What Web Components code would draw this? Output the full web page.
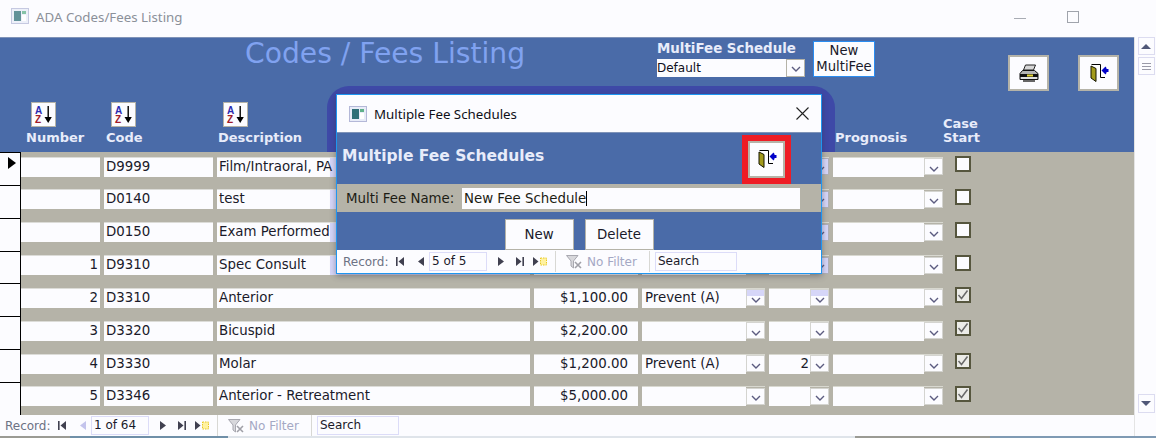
<!DOCTYPE html>
<html>
<head>
<meta charset="utf-8">
<title>ADA Codes/Fees Listing</title>
<style>
    html, body { margin: 0; height: 100%; overflow: hidden; background: #fcfcff; }
    body { font-family: 'DejaVu Sans', sans-serif; font-size: 13.35px; color: #1a1a2a; }
    #page { display: flex; flex-direction: column; width: 1156px; height: 438px; position: relative; }
    #main { display: flex; height: 399px; }
    #form { display: flex; flex-direction: column; width: 1134px; }
    #rows { display: block; height: 263px; background: #b5b3a8; }
</style>
</head>
<body>
<div id="page">
    <title-bar></title-bar>
    <div id="main">
        <div id="form">
            <form-header></form-header>
            <div id="rows">
                <fee-row current code="D9999" desc="Film/Intraoral, PA" hot></fee-row>
                <fee-row code="D0140" desc="test" hot></fee-row>
                <fee-row code="D0150" desc="Exam Performed" hot></fee-row>
                <fee-row num="1" code="D9310" desc="Spec Consult" hot></fee-row>
                <fee-row num="2" code="D3310" desc="Anterior" fee="$1,100.00" type="Prevent (A)" checked stale></fee-row>
                <fee-row num="3" code="D3320" desc="Bicuspid" fee="$2,200.00" checked></fee-row>
                <fee-row num="4" code="D3330" desc="Molar" fee="$1,200.00" type="Prevent (A)" qty="2" checked></fee-row>
                <fee-row num="5" code="D3346" desc="Anterior - Retreatment" fee="$5,000.00" checked></fee-row>
            </div>
            <record-nav pos="1 of 64" dim-prev></record-nav>
        </div>
        <scroll-bar></scroll-bar>
    </div>
    <task-strip></task-strip>
    <fee-dialog></fee-dialog>
</div>

<script>
const WIN_ICON = `<svg width="18" height="16" viewBox="0 0 18 16">
    <rect x="0.5" y="0.5" width="17" height="15" fill="#e8ecf8" stroke="#b4b8d8"/>
    <rect x="3" y="3" width="7" height="10" fill="#2f6f78"/>
    <rect x="11" y="3" width="4" height="3" fill="#5fb08a"/>
    <rect x="11" y="7" width="4" height="6" fill="#fff"/>
</svg>`;

const EXIT_ICON = `<svg width="20" height="20" viewBox="0 0 20 20">
    <path d="M2.5 1.5H11.5V14.5H16" fill="#fff" stroke="#000"/>
    <polygon points="2,3 7,5.5 7,18.5 2,15" fill="#a39b1c" stroke="#141400"/>
    <polygon points="12.5,7.5 16.5,3.5 17.5,5 17.5,10 16.5,11.5" fill="#0000c8"/>
    <rect x="17" y="6" width="2.5" height="3" fill="#0000c8"/>
</svg>`;

const PRINT_ICON = `<svg width="20" height="19" viewBox="0 0 20 19">
    <polygon points="6.5,1 16.5,1 14.5,6 4.5,6" fill="#d8d8d8" stroke="#222"/>
    <path d="M3.5 6.5H15.5L19 9.5V15.5H1V9.5Z" fill="#b4b4b4" stroke="#111"/>
    <rect x="1" y="10" width="18" height="3" fill="#111"/>
    <rect x="8" y="10.5" width="6" height="2" fill="#e8d838"/>
    <rect x="2" y="13" width="16" height="2" fill="#e0e0e0"/>
    <rect x="4" y="16" width="12" height="2" fill="#666"/>
</svg>`;

const CHEVRON = `<svg width="10" height="6" viewBox="0 0 10 6"><polyline points="1,1 5,5 9,1" fill="none" stroke="#5c5c80" stroke-width="1.4"/></svg>`;


const titleTemplate = document.createElement('template');
titleTemplate.innerHTML = `
    <style>
        :host {
            display: flex;
            align-items: center;
            height: 37px;
            box-sizing: border-box;
            padding: 0 0 3px 11px;
            background: #fcfcff;
            font: 13.3px 'Noto Sans', sans-serif;
            color: #8b9099;
        }
        svg { opacity: .75; margin-top: -3px; }
        .name { margin-left: 7px; }
        .ctrl { margin-left: auto; display: flex; align-items: center; gap: 41px; margin-right: 77px; }
        .min { width: 12px; height: 1px; background: #a8acb4; margin-top: 2px; }
        .max { width: 10px; height: 10px; border: 1px solid #a0a4ac; }
    </style>
    ${WIN_ICON}
    <span class="name">ADA Codes/Fees Listing</span>
    <div class="ctrl"><div class="min"></div><div class="max"></div></div>
`;

class TitleBar extends HTMLElement {
    constructor() {
        super();
        this.attachShadow({mode: 'open'});
        this.shadowRoot.appendChild(titleTemplate.content.cloneNode(true));
    }
}
window.customElements.define('title-bar', TitleBar);


const iconBtnTemplate = document.createElement('template');
iconBtnTemplate.innerHTML = `
    <style>
        :host {
            display: flex;
            align-items: center;
            justify-content: center;
            box-sizing: border-box;
            background: #fcfcff;
            border: 2px solid #b5b3a8;
        }
    </style>
    <slot></slot>
`;

class IconButton extends HTMLElement {
    constructor() {
        super();
        this.attachShadow({mode: 'open'});
        this.shadowRoot.appendChild(iconBtnTemplate.content.cloneNode(true));
    }
}
window.customElements.define('icon-button', IconButton);


const sortTemplate = document.createElement('template');
sortTemplate.innerHTML = `
    <style>
        :host {
            display: block;
            width: 25px;
            height: 25px;
            box-sizing: border-box;
            background: #fcfcff;
            border: 1px solid #b5b3a8;
        }
        svg { display: block; }
        text { font: bold 10px 'Liberation Sans', sans-serif; }
    </style>
    <svg width="23" height="23" viewBox="0 0 23 23">
        <text x="3" y="11" fill="#2a2ab0">A</text>
        <text x="3" y="20" fill="#a01a2a">Z</text>
        <rect x="15.5" y="3" width="1.4" height="13" fill="#000"/>
        <polygon points="12.5,14 19.8,14 16.2,20" fill="#000"/>
    </svg>
`;

class SortButton extends HTMLElement {
    constructor() {
        super();
        this.attachShadow({mode: 'open'});
        this.shadowRoot.appendChild(sortTemplate.content.cloneNode(true));
    }
}
window.customElements.define('sort-button', SortButton);


const headerTemplate = document.createElement('template');
headerTemplate.innerHTML = `
    <style>
        :host {
            display: flex;
            flex-direction: column;
            height: 115px;
            background: #4a6ba8;
            border-top: 1px solid #7f93b8;
            box-sizing: border-box;
            font-family: 'DejaVu Sans', sans-serif;
        }
        .top {
            display: grid;
            grid-template-columns: 412px 156px 195px 70px 41px;
            padding-left: 245px;
            height: 61px;
        }
        .title { font-size: 28.2px; line-height: 32px; color: #80a2f0; white-space: nowrap; }
        .multi { margin-top: 3px; }
        .multi label { display: block; font: bold 13.4px/15px 'DejaVu Sans', sans-serif; color: #e8ecfa; white-space: nowrap; }
        .pick { display: flex; width: 148px; height: 18px; margin-top: 3px; background: #fcfcff; box-sizing: border-box; font-size: 12px; line-height: 18px; color: #101020; }
        .pick span { flex: 1; }
        .pick div { width: 19px; box-sizing: border-box; border: 1px solid #b5b3a8; display: flex; align-items: center; justify-content: center; padding-top: 2px; }
        .newbtn {
            width: 62px; height: 36px; margin-top: 3px; box-sizing: border-box; padding-top: 1px;
            background: #fcfcff; border: 1px solid #2a8cf0;
            font-size: 13.2px; line-height: 16px; text-align: center; color: #1a1a2a;
        }
        .io { width: 41px; height: 36px; margin-top: 17px; }
        .cols {
            display: grid;
            grid-template-columns: 80px 112px 602px 15px 108px 80px;
            padding-left: 26px;
            height: 53px;
            box-sizing: border-box;
            padding-bottom: 7px;
            align-items: end;
            font: bold 13px/14px 'DejaVu Sans', sans-serif;
            color: #e8ecfa;
        }
        sort-button { margin: 0 0 4px 5px; }
        .frag { align-self: start; margin-top: 5px; margin-left: 0; }
    </style>
    <div class="top">
        <div class="title">Codes / Fees Listing</div>
        <div class="multi">
            <label>MultiFee Schedule</label>
            <div class="pick"><span>Default</span><div>${CHEVRON}</div></div>
        </div>
        <div class="newbtn">New<br>MultiFee</div>
        <icon-button class="io">${PRINT_ICON}</icon-button>
        <icon-button class="io">${EXIT_ICON}</icon-button>
    </div>
    <div class="cols">
        <div><sort-button></sort-button>Number</div>
        <div><sort-button></sort-button>Code</div>
        <div><sort-button></sort-button>Description</div>
        <div class="frag">e</div>
        <div>Prognosis</div>
        <div>Case<br>Start</div>
    </div>
`;

class FormHeader extends HTMLElement {
    constructor() {
        super();
        this.attachShadow({mode: 'open'});
        this.shadowRoot.appendChild(headerTemplate.content.cloneNode(true));
    }
}
window.customElements.define('form-header', FormHeader);


const comboTemplate = document.createElement('template');
comboTemplate.innerHTML = `
    <style>
        :host { display: flex; height: 20px; border-top: 1px solid #d8d8d0; box-sizing: border-box; }
        .val {
            flex: 1; min-width: 0; box-sizing: border-box; padding: 0 3px;
            background: #fcfcff; line-height: 17px; white-space: nowrap;
        }
        :host([right]) .val { text-align: right; padding-right: 1px; }
        .arrow {
            width: 19px; height: 17px; margin-top: 0.5px; box-sizing: border-box;
            background: #fcfcff; border: 1px solid #d4d4d0;
            display: flex; align-items: center; justify-content: center; padding-top: 4px;
        }
        :host([hot]) .arrow { background: #d6d6f8; border-color: #b0b0b8; }
        :host([stale]) .arrow { background: linear-gradient(#d6d6f8 6px, #fcfcff 6px); }
    </style>
    <div class="val"></div>
    <div class="arrow">${CHEVRON}</div>
`;

class ComboCell extends HTMLElement {
    static get observedAttributes() { return ['value']; }
    constructor() {
        super();
        this.attachShadow({mode: 'open'});
        this.shadowRoot.appendChild(comboTemplate.content.cloneNode(true));
    }
    attributeChangedCallback(name, oldValue, value) {
        this.shadowRoot.querySelector('.val').textContent = value;
    }
}
window.customElements.define('combo-cell', ComboCell);


const checkTemplate = document.createElement('template');
checkTemplate.innerHTML = `
    <style>
        :host {
            display: block; width: 16px; height: 16px; box-sizing: border-box;
            border: 2px solid #56563e; background: #fcfcff;
        }
        :host([checked]) { background: #ecece8; }
        svg { display: none; }
        :host([checked]) svg { display: block; }
    </style>
    <svg width="12" height="12" viewBox="0 0 12 12"><polyline points="1.5,6 4.5,9.5 10.5,1.5" fill="none" stroke="#6a6a6a" stroke-width="1.5"/></svg>
`;

class CheckBox extends HTMLElement {
    constructor() {
        super();
        this.attachShadow({mode: 'open'});
        this.shadowRoot.appendChild(checkTemplate.content.cloneNode(true));
    }
}
window.customElements.define('check-box', CheckBox);


const rowTemplate = document.createElement('template');
rowTemplate.innerHTML = `
    <style>
        :host { display: flex; height: 32.85px; }
        .sel {
            width: 21px; box-sizing: border-box; position: relative;
            background: #fcfcff; border-top: 1px solid #000; border-right: 1px solid #000;
            color: #000;
        }
        .mark { display: none; position: absolute; left: 8px; top: 4px; width: 0; height: 0;
            border-left: 8px solid #000; border-top: 6px solid transparent; border-bottom: 6px solid transparent; }
        :host([current]) .mark { display: block; }
        .cells {
            display: grid;
            grid-template-columns: 79px 109px 313px 104px 123px 60px 110px;
            column-gap: 4px;
            margin-top: 4.5px;
            height: 20px;
        }
        .cell {
            box-sizing: border-box; background: #fcfcff; padding: 0 2px; line-height: 17px;
            white-space: nowrap; overflow: hidden; border-top: 1px solid #dcdcd8;
        }
        .num { text-align: right; }
        .fee { text-align: right; padding-right: 10px; }
        :host([hot]) .desc { background: linear-gradient(90deg, #fcfcff 113px, #d6d6f8 113px); }
        check-box { margin: 4px 0 0 12px; }
    </style>
    <div class="sel"><div class="mark"></div></div>
    <div class="cells">
        <div class="cell num"></div>
        <div class="cell code"></div>
        <div class="cell desc"></div>
        <div class="cell fee"></div>
        <combo-cell class="type"></combo-cell>
        <combo-cell class="qty" right></combo-cell>
        <combo-cell class="prog"></combo-cell>
    </div>
    <check-box></check-box>
`;

class FeeRow extends HTMLElement {
    constructor() {
        super();
        this.attachShadow({mode: 'open'});
        this.shadowRoot.appendChild(rowTemplate.content.cloneNode(true));
    }
    connectedCallback() {
        const root = this.shadowRoot;
        root.querySelector('.num').textContent = this.getAttribute('num') || '';
        root.querySelector('.code').textContent = this.getAttribute('code') || '';
        root.querySelector('.desc').textContent = this.getAttribute('desc') || '';
        root.querySelector('.fee').textContent = this.getAttribute('fee') || '';
        root.querySelector('.type').setAttribute('value', this.getAttribute('type') || '');
        root.querySelector('.qty').setAttribute('value', this.getAttribute('qty') || '');
        if (this.hasAttribute('checked')) root.querySelector('check-box').setAttribute('checked', '');
        if (this.hasAttribute('hot')) root.querySelector('.qty').setAttribute('hot', '');
        if (this.hasAttribute('stale')) {
            root.querySelector('.type').setAttribute('stale', '');
            root.querySelector('.qty').setAttribute('stale', '');
        }
    }
}
window.customElements.define('fee-row', FeeRow);


const navTemplate = document.createElement('template');
navTemplate.innerHTML = `
    <style>
        :host {
            display: flex; align-items: center; height: 21px; box-sizing: border-box;
            background: #fcfcff; font: 12px 'DejaVu Sans', sans-serif; color: #1a1a2a;
        }
        .lbl { margin-left: 5px; width: 50px; color: #6c7284; }
        svg { display: block; flex: none; }
        .box { box-sizing: border-box; height: 19px; line-height: 17px; border: 1px solid #dcdcf8; padding-left: 2px; white-space: nowrap; }
        .pos { width: 58px; margin-left: 5px; }
        .sep { width: 1px; height: 21px; background: #d8d8d4; flex: none; }
        .nofilter { color: #a4a8c4; margin-left: 5px; width: 62px; }
        .search { width: 82px; margin-left: 5px; }
    </style>
    <span class="lbl">Record:</span>
    <svg style="margin-left:3px" width="8" height="9" viewBox="0 0 8 9"><rect x="0" y="0" width="1.6" height="9" fill="#404050"/><polygon points="8,0 8,9 2.5,4.5" fill="#404050"/></svg>
    <svg class="prev" style="margin-left:14px" width="6" height="9" viewBox="0 0 6 9"><polygon points="6,0 6,9 0,4.5" fill="#404050"/></svg>
    <span class="box pos"></span>
    <svg style="margin-left:11px" width="6" height="9" viewBox="0 0 6 9"><polygon points="0,0 0,9 6,4.5" fill="#404050"/></svg>
    <svg style="margin-left:12px" width="8" height="9" viewBox="0 0 8 9"><polygon points="0,0 0,9 5.5,4.5" fill="#404050"/><rect x="6.4" y="0" width="1.6" height="9" fill="#404050"/></svg>
    <svg style="margin-left:9px" width="15" height="11" viewBox="0 0 15 11"><polygon points="0,1 0,10 5.5,5.5" fill="#404050"/><rect x="7.5" y="2" width="6" height="7" fill="#fff2a0" stroke="#e8c820" stroke-dasharray="1.5 1"/></svg>
    <div class="sep" style="margin-left:7px"></div>
    <svg style="margin-left:10px" width="16" height="14" viewBox="0 0 16 14"><polygon points="0.5,0.5 12,0.5 7.5,6 7.5,13 5,11 5,6" fill="#d8d8dc" stroke="#a8a8b0"/><path d="M9 7L15 13M15 7L9 13" stroke="#a0a0a8" stroke-width="1.6"/></svg>
    <span class="nofilter">No Filter</span>
    <div class="sep" style="margin-left:0"></div>
    <span class="box search">Search</span>
`;

class RecordNav extends HTMLElement {
    constructor() {
        super();
        this.attachShadow({mode: 'open'});
        this.shadowRoot.appendChild(navTemplate.content.cloneNode(true));
    }
    connectedCallback() {
        this.shadowRoot.querySelector('.pos').textContent = this.getAttribute('pos');
        if (this.hasAttribute('dim-prev')) {
            this.shadowRoot.querySelector('.prev polygon').setAttribute('fill', '#c4c4ec');
        }
    }
}
window.customElements.define('record-nav', RecordNav);


const scrollTemplate = document.createElement('template');
scrollTemplate.innerHTML = `
    <style>
        :host {
            display: flex; flex-direction: column; align-items: center;
            width: 22px; height: 399px; box-sizing: border-box;
            background: #fcfcff; border-left: 1px solid #e4e4e4; padding-left: 1px;
        }
        .btn {
            width: 17px; box-sizing: border-box; border: 1px solid #dcdcf0; background: #fcfcff;
            display: flex; align-items: center; justify-content: center;
        }
        .up { height: 18px; }
        .thumb { height: 18px; margin-top: 2px; flex-direction: column; gap: 2px; }
        .thumb i { display: block; width: 9px; height: 1px; background: #9a9aa8; }
        .down { height: 19px; margin-top: auto; margin-bottom: 23px; }
        .tri-up { border-left: 5px solid transparent; border-right: 5px solid transparent; border-bottom: 5px solid #505878; }
        .tri-down { border-left: 5px solid transparent; border-right: 5px solid transparent; border-top: 5px solid #505878; }
    </style>
    <div class="btn up"><div class="tri-up"></div></div>
    <div class="btn thumb"><i></i><i></i><i></i></div>
    <div class="btn down"><div class="tri-down"></div></div>
`;

class ScrollBar extends HTMLElement {
    constructor() {
        super();
        this.attachShadow({mode: 'open'});
        this.shadowRoot.appendChild(scrollTemplate.content.cloneNode(true));
    }
}
window.customElements.define('scroll-bar', ScrollBar);


const stripTemplate = document.createElement('template');
stripTemplate.innerHTML = `
    <style>
        :host {
            display: block; height: 2px;
            background: linear-gradient(90deg, #9a9a94 0 70px, #6f8fa8 70px 228px, #dfe4ea 228px 855px, #9a9a94 855px 990px, #7f9ab4 990px);
        }
    </style>
`;

class TaskStrip extends HTMLElement {
    constructor() {
        super();
        this.attachShadow({mode: 'open'});
        this.shadowRoot.appendChild(stripTemplate.content.cloneNode(true));
    }
}
window.customElements.define('task-strip', TaskStrip);


const dialogTemplate = document.createElement('template');
dialogTemplate.innerHTML = `
    <style>
        :host {
            position: absolute; left: 336px; top: 94px;
            width: 486px; height: 180px;
            font-family: 'DejaVu Sans', sans-serif;
        }
        .halo {
            position: absolute; left: -9px; top: -8px; width: 508px; height: 66px;
            background: #3e49a7; border-radius: 22px 22px 0 0;
        }
        .win {
            position: relative; display: flex; flex-direction: column;
            height: 100%; box-sizing: border-box;
            border: 1px solid #1e96f0; background: #4a6ba8;
            box-shadow: 0 2px 6px rgba(50, 50, 70, .45);
        }
        .cap {
            display: flex; align-items: center; height: 37px; padding-left: 12px;
            background: #fcfcff; font: 13.3px 'Noto Sans', sans-serif; color: #101018;
        }
        .cap span { margin-left: 7px; }
        .cap svg.x { margin-left: auto; margin-right: 12px; }
        .head { display: flex; align-items: center; height: 52px; box-sizing: border-box; padding-left: 5px; border-top: 1px solid #7f93b8; }
        .head b { font-size: 15.5px; color: #e8ecfa; white-space: nowrap; margin-top: -6px; }
        .frame { margin-left: auto; margin-right: 30px; margin-top: 1px; border: 6px solid #ee1c25; }
        .frame icon-button { width: 37px; height: 37px; }
        .name {
            display: flex; align-items: center; height: 28px; background: #b5b3a8;
            font-size: 13.35px; color: #1c1c14;
        }
        .name label { margin-left: 9px; width: 116px; white-space: nowrap; padding-top: 1px; }
        .name div { width: 338px; height: 21px; line-height: 21px; background: #fcfcff; padding-left: 2px; box-sizing: border-box; white-space: nowrap; }
        .name i { display: inline-block; width: 1px; height: 15px; background: #000; vertical-align: -3px; }
        .acts { display: flex; justify-content: center; gap: 11px; height: 38px; box-sizing: border-box; padding: 7px 0 0 0; }
        .acts div {
            width: 69px; height: 31px; box-sizing: border-box; background: #fcfcff; border: 1px solid #b5b3a8;
            font-size: 13.35px; line-height: 29px; text-align: center; color: #1a1a2a;
        }
        record-nav { height: 23px; padding-left: 1px; }
    </style>
    <div class="halo"></div>
    <div class="win">
        <div class="cap">
            ${WIN_ICON}
            <span>Multiple Fee Schedules</span>
            <svg class="x" width="13" height="13" viewBox="0 0 13 13"><path d="M0.5 0.5L12.5 12.5M12.5 0.5L0.5 12.5" stroke="#222" stroke-width="1.1"/></svg>
        </div>
        <div class="head">
            <b>Multiple Fee Schedules</b>
            <div class="frame"><icon-button>${EXIT_ICON}</icon-button></div>
        </div>
        <div class="name">
            <label>Multi Fee Name:</label>
            <div>New Fee Schedule<i></i></div>
        </div>
        <div class="acts">
            <div>New</div>
            <div>Delete</div>
        </div>
        <record-nav pos="5 of 5"></record-nav>
    </div>
`;

class FeeDialog extends HTMLElement {
    constructor() {
        super();
        this.attachShadow({mode: 'open'});
        this.shadowRoot.appendChild(dialogTemplate.content.cloneNode(true));
    }
}
window.customElements.define('fee-dialog', FeeDialog);
</script>
</body>
</html>
